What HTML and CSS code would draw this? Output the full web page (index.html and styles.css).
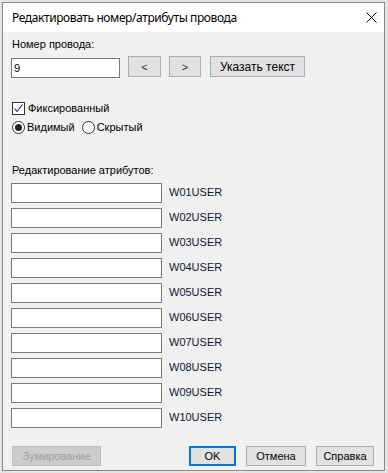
FILE: index.html
```html
<!DOCTYPE html>
<html lang="ru">
<head>
    <meta charset="UTF-8">
    <title>Редактировать номер/атрибуты провода</title>
    <link rel="stylesheet" href="styles.css">
</head>
<body>

    <div class="dialog">
        <div class="titlebar">
            <span class="title">Редактировать номер/атрибуты провода</span>
            <svg class="close" width="11" height="11" viewBox="0 0 11 11">
                <path d="M0.5 0.5 L10.5 10.5 M10.5 0.5 L0.5 10.5" stroke="#000" stroke-width="1" fill="none"/>
            </svg>
        </div>

        <div class="content">
            <div class="label">Номер провода:</div>
            <div class="number-row">
                <input type="text" class="field number-field" value="9">
                <button class="btn arrow">&lt;</button>
                <button class="btn arrow">&gt;</button>
                <button class="btn text-btn">Указать текст</button>
            </div>

            <div class="check-row">
                <span class="checkbox">
                    <svg width="11" height="11" viewBox="0 0 11 11">
                        <path d="M1.5 5.5 L4 8.5 L9.5 1.5" stroke="#222" stroke-width="1.1" fill="none"/>
                    </svg>
                </span>
                <span>Фиксированный</span>
            </div>

            <div class="radio-row">
                <span class="radio checked"></span>
                <span class="radio-label">Видимый</span>
                <span class="radio"></span>
                <span>Скрытый</span>
            </div>

            <div class="label attr-title">Редактирование атрибутов:</div>
            <div class="attr-list">
                <div class="attr-row"><input type="text" class="field attr-field"><span>W01USER</span></div>
                <div class="attr-row"><input type="text" class="field attr-field"><span>W02USER</span></div>
                <div class="attr-row"><input type="text" class="field attr-field"><span>W03USER</span></div>
                <div class="attr-row"><input type="text" class="field attr-field"><span>W04USER</span></div>
                <div class="attr-row"><input type="text" class="field attr-field"><span>W05USER</span></div>
                <div class="attr-row"><input type="text" class="field attr-field"><span>W06USER</span></div>
                <div class="attr-row"><input type="text" class="field attr-field"><span>W07USER</span></div>
                <div class="attr-row"><input type="text" class="field attr-field"><span>W08USER</span></div>
                <div class="attr-row"><input type="text" class="field attr-field"><span>W09USER</span></div>
                <div class="attr-row"><input type="text" class="field attr-field"><span>W10USER</span></div>
            </div>

            <div class="footer">
                <button class="btn zoom-btn" disabled>Зумирование</button>
                <div class="footer-right">
                    <button class="btn ok-btn">OK</button>
                    <button class="btn cancel-btn">Отмена</button>
                    <button class="btn help-btn">Справка</button>
                </div>
            </div>
        </div>
    </div>

</body>
</html>
```
FILE: styles.css
```css
body {
    margin: 0;
    background: #e4e4e4;
    font-family: "Liberation Sans", Arial, sans-serif;
    font-size: 11px;
    color: #000;
}

.dialog {
    margin: 2px 0 0 2px;
    width: 383px;
    height: 469px;
    box-sizing: border-box;
    border: 1px solid #8a8a8a;
    background: #f0f0f0;
    display: flex;
    flex-direction: column;
}

.titlebar {
    height: 29px;
    background: white;
    display: flex;
    align-items: center;
    justify-content: space-between;
    padding: 0 7px 0 9px;
}

.title {
    font-family: "Noto Sans", sans-serif;
    font-size: 12px;
    letter-spacing: -0.4px;
    margin-top: -1px;
}

.close {
    margin-top: -1px;
}

.content {
    flex: 1;
    display: flex;
    flex-direction: column;
    padding: 6px 10px 4px 8px;
}

.label {
    line-height: 13px;
    padding-left: 1px;
}

.number-row {
    display: flex;
    align-items: flex-start;
    margin-top: 5px;
}

.field {
    box-sizing: border-box;
    height: 20px;
    border: 1px solid #7a7a7a;
    background: white;
    margin: 0;
    padding: 0 2px;
    font-family: "Liberation Sans", Arial, sans-serif;
    font-size: 11px;
    outline: none;
}

.number-field {
    width: 109px;
    margin-top: 2px;
}

.btn {
    box-sizing: border-box;
    height: 21px;
    border: 1px solid #adadad;
    background: #e1e1e1;
    margin: 0;
    padding: 0;
    font-family: "Liberation Sans", Arial, sans-serif;
    font-size: 11px;
    color: #000;
}

.arrow {
    width: 33px;
    margin-left: 8px;
    color: #333;
}

.arrow + .arrow {
    width: 32px;
}

.text-btn {
    width: 95px;
    margin-left: 9px;
    font-size: 12px;
}

.check-row,
.radio-row {
    display: flex;
    align-items: center;
    line-height: 13px;
    padding-left: 1px;
}

.check-row {
    margin-top: 24px;
}

.radio-row {
    margin-top: 6px;
}

.checkbox {
    box-sizing: border-box;
    width: 13px;
    height: 13px;
    border: 1px solid #333;
    background: white;
    display: flex;
    margin-right: 3px;
}

.radio {
    box-sizing: border-box;
    width: 13px;
    height: 13px;
    border: 1px solid #333;
    border-radius: 50%;
    background: white;
    margin-right: 2px;
    position: relative;
}

.radio.checked::after {
    content: "";
    position: absolute;
    left: 2px;
    top: 2px;
    width: 7px;
    height: 7px;
    border-radius: 50%;
    background: #222;
}

.radio-label {
    margin-right: 7px;
}

.attr-title {
    margin-top: 30px;
}

.attr-list {
    display: flex;
    flex-direction: column;
    gap: 5px;
    margin-top: 6px;
}

.attr-row {
    display: flex;
    align-items: center;
}

.attr-field {
    width: 151px;
    margin-right: 7px;
}

.attr-row span {
    margin-top: -3px;
    color: #101830;
}

.footer {
    margin-top: auto;
    display: flex;
    justify-content: space-between;
    align-items: center;
}

.footer .btn {
    height: 20px;
}

.zoom-btn {
    width: 89px;
    margin-left: 1px;
    background: #cccccc;
    border-color: #bfbfbf;
    color: #a0a0a0;
}

.footer-right {
    display: flex;
    gap: 10px;
}

.ok-btn {
    width: 47px;
    border: 2px solid #0078d7;
}

.cancel-btn {
    width: 60px;
}

.help-btn {
    width: 58px;
}
```
